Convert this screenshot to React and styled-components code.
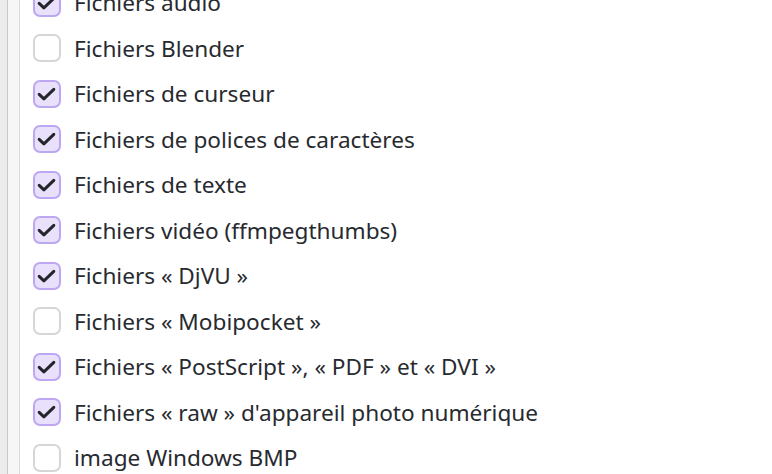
import React from "react";
import styled, { createGlobalStyle } from "styled-components";

const GlobalStyle = createGlobalStyle`
  html, body {
    margin: 0;
    padding: 0;
    background: #ffffff;
    overflow: hidden;
  }
  body {
    font-family: "Noto Sans", "Open Sans", sans-serif;
  }
`;

const Window = styled.div`
  display: flex;
  width: 772px;
  height: 474px;
  overflow: hidden;
`;

const Rail = styled.div`
  width: 7px;
  background: #ececec;
  border-right: 1px solid #c9c9c9;
`;

const Gutter = styled.div`
  width: 11px;
  background: #f6f6f6;
  border-right: 1px solid #dadada;
`;

const List = styled.ul`
  list-style: none;
  margin: -20px 0 0 0;
  padding: 0 0 0 13px;
  flex: 1;
`;

const Row = styled.li`
  display: flex;
  align-items: center;
  height: 45.5px;
  gap: 13px;
`;

const Box = styled.span`
  box-sizing: border-box;
  width: 28px;
  height: 28px;
  border-radius: 7px;
  border: 2px solid ${(p) => (p.$checked ? "#bda6f2" : "#d6d6d6")};
  background: ${(p) => (p.$checked ? "#e9e0fc" : "#ffffff")};
  display: flex;
  align-items: center;
  justify-content: center;
  flex-shrink: 0;
`;

const Label = styled.span`
  font-size: 22.6px;
  color: #272a2f;
  white-space: nowrap;
`;

const Check = () => (
  <svg width="24" height="24" viewBox="0 0 24 24">
    <path
      d="M4.2 12.4 L8.9 16.8 L18.8 7.4"
      fill="none"
      stroke="#23252a"
      strokeWidth="3"
      strokeLinecap="round"
      strokeLinejoin="round"
    />
  </svg>
);

const items = [
  { label: "Fichiers audio", checked: true },
  { label: "Fichiers Blender", checked: false },
  { label: "Fichiers de curseur", checked: true },
  { label: "Fichiers de polices de caractères", checked: true },
  { label: "Fichiers de texte", checked: true },
  { label: "Fichiers vidéo (ffmpegthumbs)", checked: true },
  { label: "Fichiers « DjVU »", checked: true },
  { label: "Fichiers « Mobipocket »", checked: false },
  { label: "Fichiers « PostScript », « PDF » et « DVI »", checked: true },
  { label: "Fichiers « raw » d'appareil photo numérique", checked: true },
  { label: "image Windows BMP", checked: false },
];

export default function App() {
  return (
    <Window>
      <GlobalStyle />
      <Rail />
      <Gutter />
      <List>
        {items.map((item) => (
          <Row key={item.label}>
            <Box $checked={item.checked}>{item.checked && <Check />}</Box>
            <Label>{item.label}</Label>
          </Row>
        ))}
      </List>
    </Window>
  );
}
